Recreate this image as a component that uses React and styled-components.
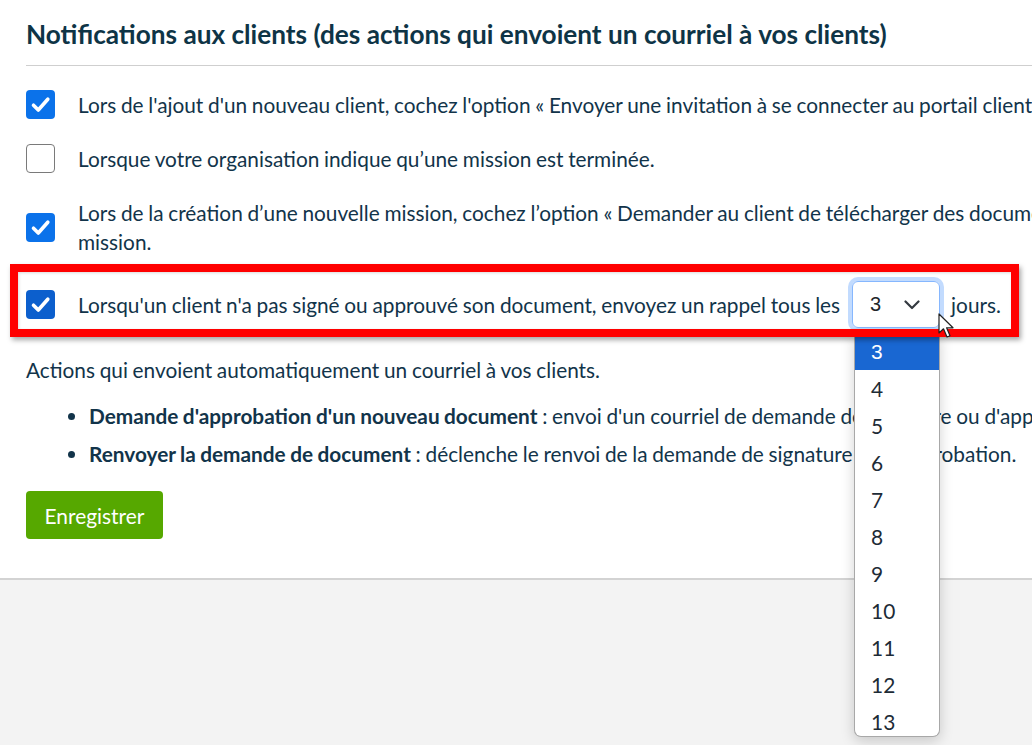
import React from "react";
import styled, { createGlobalStyle } from "styled-components";

const GlobalStyle = createGlobalStyle`
    html, body {
        margin: 0;
        padding: 0;
        overflow: hidden;
        background: #ffffff;
    }
    body {
        font-family: Lato, "Open Sans", sans-serif;
        color: #12344a;
        width: 1032px;
        height: 745px;
    }
`;

const Check = ({checked, dark}) => (
    <Box $checked={checked} $dark={dark}>
        {checked && (
            <svg width="29" height="29" viewBox="0 0 29 29">
                <path
                    d="M7.5 15.2 L12.3 20 L21.8 9.2"
                    fill="none"
                    stroke="#ffffff"
                    strokeWidth="3.6"
                    strokeLinecap="round"
                    strokeLinejoin="round"
                />
            </svg>
        )}
    </Box>
);

const Chevron = () => (
    <svg width="16" height="10" viewBox="0 0 16 10">
        <path d="M1.5 1.5 L8 8 L14.5 1.5" fill="none" stroke="#343a40" strokeWidth="2.2" strokeLinecap="round" strokeLinejoin="round" />
    </svg>
);

const Cursor = () => (
    <CursorWrap>
        <svg width="17" height="26" viewBox="0 0 17 26">
            <path d="M1 1 L1 20 L5.5 15.8 L9 24 L12 22.8 L8.6 14.8 L15 14.8 Z" fill="#ffffff" stroke="#222" strokeWidth="1.2" strokeLinejoin="round" />
        </svg>
    </CursorWrap>
);

const OPTIONS = [3, 4, 5, 6, 7, 8, 9, 10, 11, 12, 13, 14];

const App = () => {
    return (
        <>
            <GlobalStyle />
            <Page>
                <Content>
                    <Title>{"Notifications aux clients (des actions qui envoient un courriel à vos clients)"}</Title>
                    <Divider />
                    <Row>
                        <Check checked />
                        <Label>{"Lors de l'ajout d'un nouveau client, cochez l'option « Envoyer une invitation à se connecter au portail client »."}</Label>
                    </Row>
                    <Row>
                        <Check />
                        <Label>{"Lorsque votre organisation indique qu’une mission est terminée."}</Label>
                    </Row>
                    <Row>
                        <Check checked />
                        <Label>
                            {"Lors de la création d’une nouvelle mission, cochez l’option « Demander au client de télécharger des documents » pour la"}
                            <br />
                            {"mission."}
                        </Label>
                    </Row>
                    <Highlight>
                        <Check checked dark />
                        <Label>{"Lorsqu'un client n'a pas signé ou approuvé son document, envoyez un rappel tous les"}</Label>
                        <SelectWrap>
                            <Select>
                                <span>{"3"}</span>
                                <Chevron />
                            </Select>
                            <Cursor />
                            <Dropdown>
                                {OPTIONS.map((n) => (
                                    <Option key={n} $active={n === 3}>{n}</Option>
                                ))}
                            </Dropdown>
                        </SelectWrap>
                        <Label>{"jours."}</Label>
                    </Highlight>
                    <Paragraph>{"Actions qui envoient automatiquement un courriel à vos clients."}</Paragraph>
                    <List>
                        <li>
                            <b>{"Demande d'approbation d'un nouveau document"}</b>
                            {" : envoi d'un courriel de demande de signature ou d'approbation au client."}
                        </li>
                        <li>
                            <b>{"Renvoyer la demande de document"}</b>
                            {" : déclenche le renvoi de la demande de signature ou d'approbation."}
                        </li>
                    </List>
                    <SaveButton>{"Enregistrer"}</SaveButton>
                </Content>
                <Footer />
            </Page>
        </>
    );
};

export default App;

const Page = styled.div`
    display: flex;
    flex-direction: column;
    height: 745px;
`;

const Content = styled.div`
    padding: 13px 0 39px 26px;
    font-size: 20.8px;
    word-spacing: -0.6px;
`;

const Title = styled.h2`
    margin: 0;
    font-size: 26.2px;
    line-height: 42px;
    font-weight: 700;
    color: #0e3446;
    white-space: nowrap;
    word-spacing: 0;
`;

const Divider = styled.div`
    height: 1px;
    background: #cfcfcf;
    margin: 10px 0 24px;
`;

const Row = styled.div`
    display: flex;
    align-items: center;
    gap: 23px;
    margin-bottom: 25px;
`;

const Highlight = styled(Row)`
    position: relative;
    width: fit-content;
    height: 47px;
    gap: 0;
    margin-top: 2px;
    margin-bottom: 27px;
    & > div:first-child {
        margin-right: 23px;
    }
    &::after {
        content: "";
        position: absolute;
        top: -17px;
        bottom: -9px;
        left: -16px;
        right: -18px;
        border: 8px solid #ff0000;
        box-shadow: 2px 3px 5px rgba(0, 0, 0, 0.35), inset 1px 1px 3px rgba(0, 0, 0, 0.15);
        z-index: 3;
        pointer-events: none;
    }
`;

const Box = styled.div`
    flex: none;
    width: 29px;
    height: 29px;
    box-sizing: border-box;
    border-radius: 4px;
    background: ${(p) => (p.$checked ? (p.$dark ? "#0c5fcd" : "#0b72ea") : "#ffffff")};
    border: ${(p) => (p.$checked ? "none" : "1.5px solid #7a7a7a")};
    svg {
        display: block;
    }
`;

const Label = styled.div`
    line-height: 29px;
    white-space: nowrap;
`;

const SelectWrap = styled.div`
    position: relative;
    margin: 0 11px 0 12px;
`;

const Select = styled.div`
    box-sizing: border-box;
    width: 88px;
    height: 47px;
    border: 1px solid #86b7fe;
    border-radius: 6px;
    box-shadow: 0 0 0 4px rgba(13, 110, 253, 0.25);
    display: flex;
    align-items: center;
    justify-content: space-between;
    padding: 0 19px 0 17px;
    font-family: "Liberation Sans", Arial, sans-serif;
    font-size: 20px;
    color: #212529;
`;

const CursorWrap = styled.div`
    position: absolute;
    left: 86px;
    top: 32px;
    z-index: 5;
    svg {
        display: block;
    }
`;

const Dropdown = styled.div`
    position: absolute;
    left: 2px;
    top: 52px;
    width: 86px;
    height: 404px;
    box-sizing: border-box;
    background: #ffffff;
    border: 1px solid #a8a8a8;
    border-top: none;
    border-radius: 0 0 7px 7px;
    overflow: hidden;
    box-shadow: 0 4px 14px rgba(0, 0, 0, 0.18);
    z-index: 2;
`;

const Option = styled.div`
    height: 37px;
    line-height: 37px;
    padding-left: 16px;
    font-size: 20.9px;
    background: ${(p) => (p.$active ? "#1967d2" : "transparent")};
    color: ${(p) => (p.$active ? "#ffffff" : "#1d2b36")};
    font-family: ${(p) => (p.$active ? "\"Liberation Sans\", Arial, sans-serif" : "Lato, sans-serif")};
`;

const Paragraph = styled.p`
    margin: 0 0 17px;
    line-height: 29px;
`;

const List = styled.ul`
    margin: 0 0 23px;
    padding-left: 63px;
    li {
        line-height: 29px;
        margin-bottom: 9px;
        white-space: nowrap;
    }
    b {
        font-weight: 700;
    }
`;

const SaveButton = styled.button`
    display: block;
    width: 137px;
    height: 48px;
    border: none;
    border-radius: 4px;
    background: #56a800;
    color: #ffffff;
    font-family: Lato, sans-serif;
    font-size: 20.9px;
`;

const Footer = styled.div`
    flex: 1;
    background: #f3f3f3;
    border-top: 2px solid #d3d3d3;
`;
